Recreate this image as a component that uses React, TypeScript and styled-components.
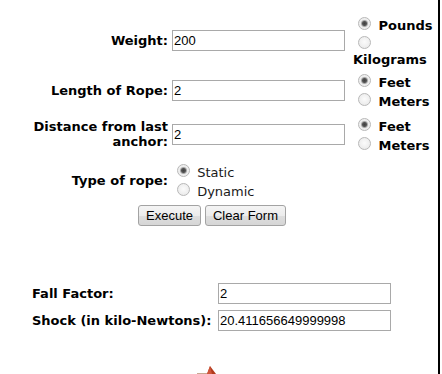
import styled, { createGlobalStyle } from "styled-components"

const GlobalStyle = createGlobalStyle`
  body {
    margin: 0;
    background: #fff;
  }
`

const Page = styled.div`
  width: 438px;
  min-height: 374px;
  border-right: 2px solid #000;
  font-family: "DejaVu Sans", Verdana, sans-serif;
  font-size: 13px;
  color: #000;
  overflow: hidden;
`

const FormTable = styled.div`
  display: flex;
  flex-direction: column;
`

const FormRow = styled.div<{ $top: number }>`
  display: grid;
  grid-template-columns: 172px 181px 84px;
  align-items: center;
  margin-top: ${(p) => p.$top}px;
`

const Label = styled.label`
  font-weight: bold;
  text-align: right;
  padding-right: 4px;
`

const TextBox = styled.input`
  box-sizing: border-box;
  width: 173px;
  height: 21px;
  margin: 0;
  padding: 0 1px;
  border: 1px solid #a9a9a9;
  font: 13px "Liberation Sans", Arial, sans-serif;
  color: #000;
  background: #fff;
`

const RadioGroup = styled.div<{ $bold?: boolean }>`
  font-weight: ${(p) => (p.$bold ? "bold" : "normal")};
  color: ${(p) => (p.$bold ? "#000" : "#1a1a1a")};
`

const Radio = styled.input.attrs({ type: "radio" })`
  appearance: none;
  box-sizing: border-box;
  width: 13px;
  height: 13px;
  margin: 3px 3px 0 5px;
  border: 1px solid #b8b8b8;
  border-radius: 50%;
  background: radial-gradient(circle at 50% 45%, #fbfbfb 0, #e6e6e6 100%);
  vertical-align: baseline;
  &:checked {
    background: radial-gradient(
      circle at 50% 50%,
      #3f3f3f 0,
      #555 2px,
      #a8a8a8 3px,
      #ececec 4px,
      #f6f6f6 100%
    );
  }
`

const ButtonRow = styled.div`
  display: flex;
  justify-content: center;
  gap: 4px;
  margin-top: 6px;
  padding-right: 14px;
`

const Button = styled.button`
  height: 21px;
  margin: 0;
  padding: 0 7px;
  border: 1px solid #a3a3a3;
  border-radius: 3px;
  background: linear-gradient(#f4f4f4 0%, #ececec 50%, #dedede 51%, #d6d6d6 100%);
  font: 13px "Liberation Sans", Arial, sans-serif;
  color: #000;
`

const ResultGrid = styled.div`
  display: grid;
  grid-template-columns: 186px 173px;
  row-gap: 6px;
  align-items: center;
  padding-left: 32px;
  margin-top: 57px;
`

const ResultLabel = styled.label`
  font-weight: bold;
`

const Figure = styled.div`
  padding-left: 196px;
  margin-top: 34px;
  line-height: 0;
`

function RopeArrow() {
  return (
    <svg width="24" height="14" viewBox="0 0 24 14">
      <line x1="1" y1="8.5" x2="11" y2="8.5" stroke="#c9a893" strokeWidth="1" />
      <path d="M14 1 L20 9 L11 9 Z" fill="#b23a1c" />
      <path d="M14 1 L16 9 L11 9 Z" fill="#d0553a" />
    </svg>
  )
}

export default function App() {
  return (
    <Page>
      <GlobalStyle />
      <FormTable>
        <FormRow $top={14}>
          <Label htmlFor="weight">Weight:</Label>
          <TextBox id="weight" defaultValue="200" />
          <RadioGroup $bold>
            <div>
              <Radio name="weightUnit" defaultChecked /> Pounds
            </div>
            <div>
              <Radio name="weightUnit" /> Kilograms
            </div>
          </RadioGroup>
        </FormRow>

        <FormRow $top={4}>
          <Label htmlFor="length">Length of Rope:</Label>
          <TextBox id="length" defaultValue="2" />
          <RadioGroup $bold>
            <div>
              <Radio name="lengthUnit" defaultChecked /> Feet
            </div>
            <div>
              <Radio name="lengthUnit" /> Meters
            </div>
          </RadioGroup>
        </FormRow>

        <FormRow $top={6}>
          <Label htmlFor="distance">Distance from last anchor:</Label>
          <TextBox id="distance" defaultValue="2" />
          <RadioGroup $bold>
            <div>
              <Radio name="distanceUnit" defaultChecked /> Feet
            </div>
            <div>
              <Radio name="distanceUnit" /> Meters
            </div>
          </RadioGroup>
        </FormRow>

        <FormRow $top={8}>
          <Label>Type of rope:</Label>
          <RadioGroup>
            <div>
              <Radio name="ropeType" defaultChecked /> Static
            </div>
            <div>
              <Radio name="ropeType" /> Dynamic
            </div>
          </RadioGroup>
        </FormRow>

        <ButtonRow>
          <Button type="button">Execute</Button>
          <Button type="reset">Clear Form</Button>
        </ButtonRow>
      </FormTable>

      <ResultGrid>
        <ResultLabel htmlFor="fallFactor">Fall Factor:</ResultLabel>
        <TextBox id="fallFactor" defaultValue="2" />
        <ResultLabel htmlFor="shock">Shock (in kilo-Newtons):</ResultLabel>
        <TextBox id="shock" defaultValue="20.411656649999998" />
      </ResultGrid>

      <Figure>
        <RopeArrow />
      </Figure>
    </Page>
  )
}
